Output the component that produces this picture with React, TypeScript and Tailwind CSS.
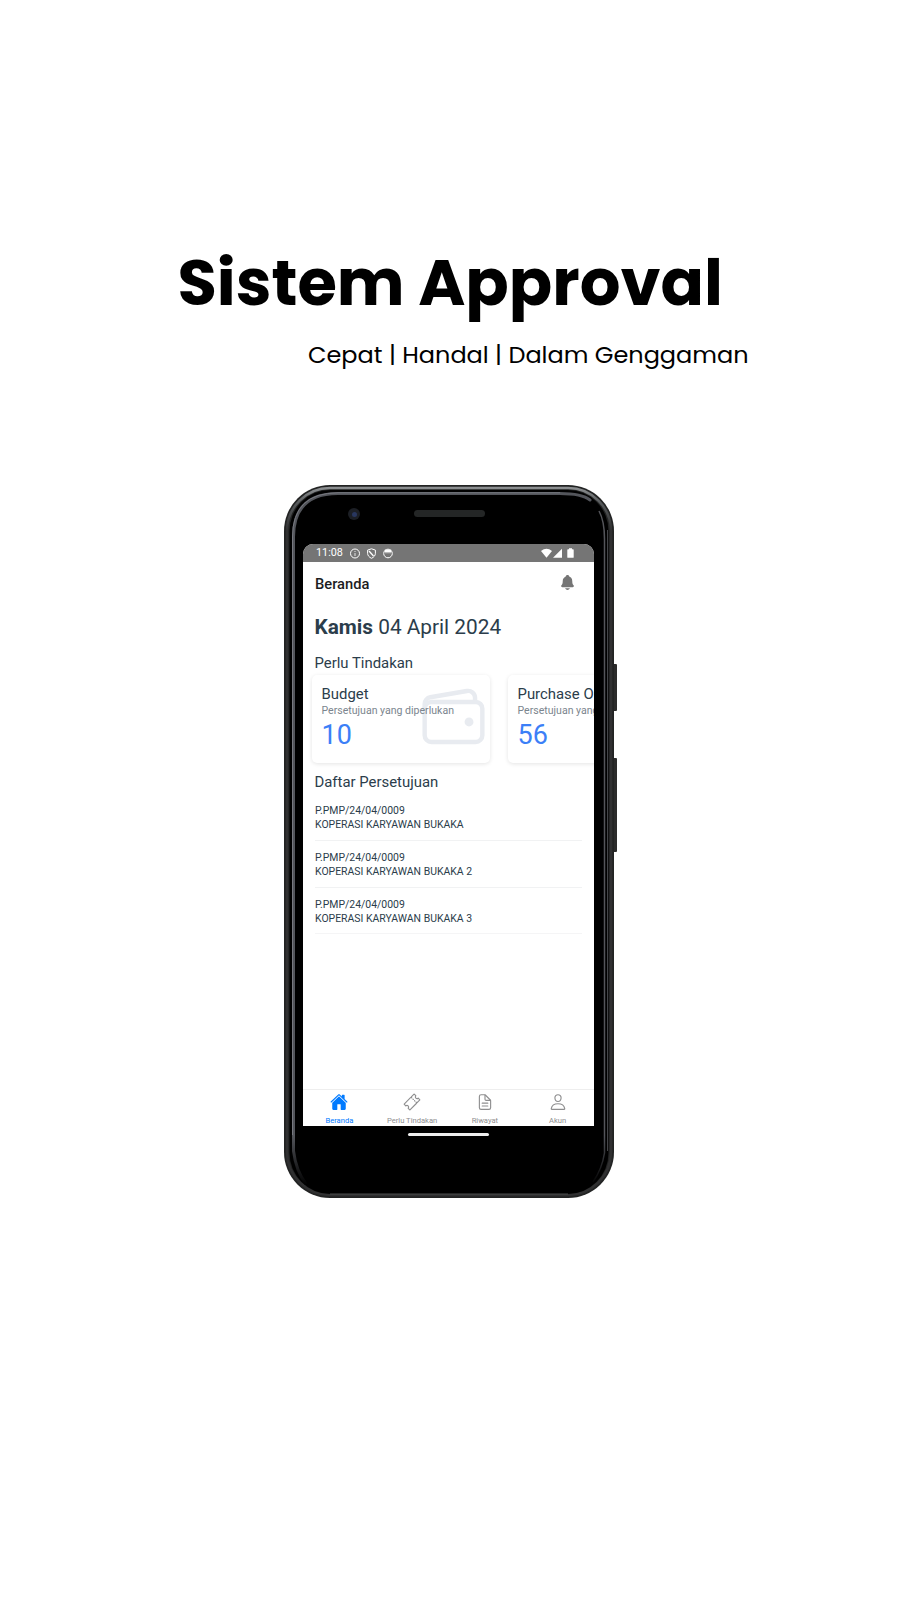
import type { ReactNode } from "react";
import { IoDocumentTextOutline, IoHome, IoNotifications, IoPersonOutline, IoTicketOutline, IoWalletOutline } from "react-icons/io5";

const approvals = ["KOPERASI KARYAWAN BUKAKA", "KOPERASI KARYAWAN BUKAKA 2", "KOPERASI KARYAWAN BUKAKA 3"];

function StatusBar() {
  return (
    <div className="flex h-[18px] shrink-0 items-center bg-[#757575] pl-[13px] pr-[20px] text-[10.8px] leading-none text-white">
      <span className="w-[34px]">11:08</span>
      <svg className="h-[11px] w-[44px]" viewBox="0 0 44 11" fill="none" stroke="white">
        <circle cx="5" cy="5.5" r="4.5" />
        <path d="M5 5v3M5 3v1" strokeOpacity=".8" />
        <path d="M21.5 .8l3.900 1.300v3.200c0 2.200-1.600 4-3.900 5-2.300-1-3.900-2.800-3.900-5V2.100z" />
        <path d="M19 3l4.500 5" strokeWidth="1.300" />
        <circle cx="38" cy="5.500" r="4.300" />
        <path d="M34.700 3h6.600" strokeWidth="2.500" />
        <path d="M35.500 4.800h5" strokeWidth="1" strokeDasharray="1 1" />
      </svg>
      <svg className="ml-auto h-[11px] w-[33px]" viewBox="0 0 33 11" fill="white">
        <path d="M0 3Q5.500-1.500 11 3L5.500 9.800z" />
        <path d="M12 9.800L21 .8v9z" />
        <path d="M28 .3h3v1h1q.700 0 .700.700v7.200q0 .600-.700.600h-5q-.700 0-.700-.600V2q0-.700.700-.700h1z" />
      </svg>
    </div>
  );
}

function Card({ title, count, icon }: { title: string; count: number; icon?: ReactNode }) {
  return (
    <div className="relative h-[88px] w-[178px] shrink-0 rounded-[5px] bg-white pl-[9.5px] pt-[10px] shadow-[0_1px_4px_rgba(0,0,0,0.11)]">
      {icon}
      <div className="relative whitespace-nowrap">
        <div className="text-[14.9px] leading-[18px]">{title}</div>
        <div className="text-[10.55px] leading-[16px] text-[#7b858e]">Persetujuan yang diperlukan</div>
        <div className="text-[27px] leading-[32px] text-[#3c7ff7]">{count}</div>
      </div>
    </div>
  );
}

function Tab({ icon, label, active }: { icon: ReactNode; label: string; active?: boolean }) {
  return (
    <div className={active ? "flex flex-1 flex-col items-center pt-[3px] text-[#007aff]" : "flex flex-1 flex-col items-center pt-[3px] text-[#8e8e8f]"}>
      {icon}
      <span className="mt-[5px] text-[7.6px] leading-[10px]">{label}</span>
    </div>
  );
}

function Screen() {
  return (
    <div className="flex h-[582px] w-[291px] shrink-0 flex-col overflow-hidden rounded-t-[10px] bg-white text-[#2b3d4b]">
      <StatusBar />
      <header className="flex h-[43px] shrink-0 items-center justify-between pl-[12px] pr-[18px] text-[#1c1c1e]">
        <span className="pt-[2px] text-[14.7px] font-medium">Beranda</span>
        <IoNotifications className="-mt-[2px] size-[17px] text-[#757575]" />
      </header>
      <div className="pl-[11.5px] pt-[8px] text-[20.8px] leading-[28px]"><b>Kamis</b> 04 April 2024</div>
      <h2 className="pl-[11.5px] pt-[12px] text-[14.9px] leading-[20px]">Perlu Tindakan</h2>
      <div className="flex gap-[18px] pl-[9px] pt-[2px]">
        <Card title="Budget" count={10} icon={<IoWalletOutline className="absolute right-[1px] top-[7px] size-[71px] text-[#e8ebf0]" />} />
        <Card title="Purchase Order" count={56} />
      </div>
      <h2 className="pl-[11.5px] pt-[9px] text-[14.9px] leading-[20px]">Daftar Persetujuan</h2>
      <div className="px-[12px] pt-[2px]">
        {approvals.map((name) => (
          <div key={name} className="h-[47px] border-b border-[#f1f2f3] pt-[10px] text-[10.45px] leading-[14px] last:h-[46px] last:border-[#f5f5f6]">
            <div>P.PMP/24/04/0009</div>
            <div>{name}</div>
          </div>
        ))}
      </div>
      <nav className="mt-auto flex h-[37px] shrink-0 overflow-hidden border-t border-[#eeeeee]">
        <Tab active icon={<IoHome className="size-[18px]" />} label="Beranda" />
        <Tab icon={<IoTicketOutline className="size-[18px]" />} label="Perlu Tindakan" />
        <Tab icon={<IoDocumentTextOutline className="size-[18px]" />} label="Riwayat" />
        <Tab icon={<IoPersonOutline className="size-[18px]" />} label="Akun" />
      </nav>
    </div>
  );
}

function Bezel() {
  return (
    <svg className="absolute inset-0 h-full w-full" viewBox="0 0 330 713" fill="none">
      <defs>
        <linearGradient id="rim" x1="0" y1="0" x2="0" y2="46" gradientUnits="userSpaceOnUse">
          <stop stopColor="#96999b" />
          <stop offset=".4" stopColor="#55585a" />
          <stop offset="1" stopColor="#303031" />
        </linearGradient>
        <linearGradient id="fade" x1="0" y1="640" x2="0" y2="700" gradientUnits="userSpaceOnUse">
          <stop stopColor="#65676e" />
          <stop offset="1" stopColor="#000" />
        </linearGradient>
      </defs>
      <rect width="330" height="713" rx="46" fill="#222323" />
      <rect x="3" y="3" width="324" height="707" rx="43" stroke="url(#rim)" strokeWidth="2.5" />
      <rect x="5.500" y="5" width="319" height="704" rx="41" fill="#000" />
      <path d="M9.500 650V52Q9.500 8.500 54 8.500H276Q298 8.500 306 15" stroke="#53555b" strokeWidth="3" strokeLinecap="round" />
      <path d="M8.500 650V52Q8.500 7.800 54 7.800H276" stroke="#777980" />
      <path d="M9.500 650V666Q12 686 22 699" stroke="url(#fade)" strokeWidth="3" />
      <path d="M315 26Q320.500 36 320.500 54V650" stroke="#54555a" strokeWidth="1.500" />
      <path d="M323.500 45V666" stroke="#454649" />
      <path d="M320.500 650V668Q318 684 309 697" stroke="url(#fade)" strokeWidth="1.500" />
      <path d="M46 709H284" stroke="#4b4c4d" />
    </svg>
  );
}

export default function App() {
  return (
    <main className="flex h-[1600px] w-[900px] flex-col overflow-hidden bg-white font-['Roboto',sans-serif] text-black">
      <h1 className="mt-[243px] whitespace-nowrap pl-[177.5px] font-['Poppins','Inter',sans-serif] text-[64px] font-bold leading-[80px]">Sistem Approval</h1>
      <p className="mt-[12px] whitespace-nowrap pl-[308px] font-['Poppins','Inter',sans-serif] text-[23.97px] leading-[40px]">Cepat | Handal | Dalam Genggaman</p>
      <div className="relative ml-[284px] mt-[110px] h-[713px] w-[330px]">
        <div className="absolute -right-[3px] top-[179px] h-[47px] w-[6px] rounded-[1px] bg-[#2b2b2b]" />
        <div className="absolute -right-[3px] top-[273px] h-[94px] w-[6px] rounded-[1px] bg-[#2b2b2b]" />
        <Bezel />
        <div className="relative flex h-full flex-col pl-[19px]">
          <div className="flex h-[59px] w-full shrink-0 items-start">
            <div className="ml-[45px] mt-[23px] flex size-[12px] items-center justify-center rounded-full bg-[#1c1f25]">
              <div className="size-[5px] rounded-full bg-[#29375f]" />
            </div>
            <div className="ml-[54px] mt-[25px] h-[7px] w-[71px] rounded-full bg-[#242626]" />
          </div>
          <Screen />
          <div className="ml-[105px] mt-[7px] h-[3px] w-[81px] rounded-full bg-[#eeeeee]" />
        </div>
      </div>
    </main>
  );
}
